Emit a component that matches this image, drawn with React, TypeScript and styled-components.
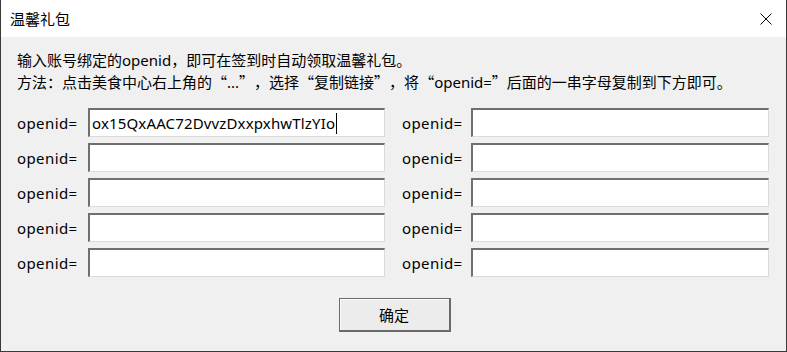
import styled, { createGlobalStyle } from "styled-components";
import { FC, Fragment } from "react";

const GlobalStyle = createGlobalStyle`
  html, body {
    margin: 0;
    padding: 0;
    background: #f0f0f0;
  }
  body {
    font-family: "Noto Sans", "Noto Sans CJK SC", sans-serif;
    font-size: 15px;
    color: #000;
  }
`;

const OPENIDS = ["ox15QxAAC72DvvzDxxpxhwTlzYIo", "", "", "", "", "", "", "", "", ""];

interface IFieldProps {
  value: string;
  focused?: boolean;
  labelWidth: number;
}

const Field: FC<IFieldProps> = ({ value, focused, labelWidth }) => {
  return (
    <FieldRow>
      <Label $width={labelWidth}>openid=</Label>
      <TextBox>
        {value}
        {focused && <Caret />}
      </TextBox>
    </FieldRow>
  );
};

export default function App() {
  // left column holds the first five, right column the rest
  const left = OPENIDS.slice(0, 5);
  const right = OPENIDS.slice(5);
  return (
    <>
      <GlobalStyle />
      <Window>
        <TitleBar>
          <Title>温馨礼包</Title>
          <CloseButton aria-label="close">
            <svg width="12" height="12" viewBox="0 0 12 12">
              <path d="M0.5 0.5 L11.5 11.5 M11.5 0.5 L0.5 11.5" stroke="#000" strokeWidth="1" fill="none" />
            </svg>
          </CloseButton>
        </TitleBar>
        <Body>
          <Intro>
            <div>输入账号绑定的openid，即可在签到时自动领取温馨礼包。</div>
            <div>
              方法：点击美食中心右上角的<OpenQ>“</OpenQ>...<CloseQ>”</CloseQ>，选择<OpenQ>“</OpenQ>复制链接
              <CloseQ>”</CloseQ>，将<OpenQ>“</OpenQ>openid=<CloseQ>”</CloseQ>后面的一串字母复制到下方即可。
            </div>
          </Intro>
          <Grid>
            {left.map((v, i) => (
              <Fragment key={i}>
                <Field value={v} focused={i === 0} labelWidth={71} />
                <Field value={right[i]} labelWidth={69} />
              </Fragment>
            ))}
          </Grid>
          <Footer>
            <OkButton>确定</OkButton>
          </Footer>
        </Body>
      </Window>
    </>
  );
}

const Window = styled.div`
  width: 787px;
  height: 352px;
  box-sizing: border-box;
  border: 1px solid #3a3a3a;
  border-top: none;
  background: #f0f0f0;
  display: flex;
  flex-direction: column;
`;

const TitleBar = styled.div`
  height: 37px;
  background: #fff;
  display: flex;
  align-items: center;
  justify-content: space-between;
  padding: 0 14px 0 9px;
`;

const Title = styled.div`
  font-family: "Noto Sans CJK SC", sans-serif;
  font-size: 15px;
  line-height: 20px;
  margin-top: 1px;
`;

const CloseButton = styled.div`
  width: 12px;
  height: 12px;
  display: flex;
`;

const Body = styled.div`
  flex: 1;
  padding: 12px 16px 0 16px;
  display: flex;
  flex-direction: column;
`;

const Intro = styled.div`
  line-height: 22px;
  white-space: nowrap;
`;

const OpenQ = styled.span`
  display: inline-block;
  width: 15px;
  text-align: right;
  font-family: "Noto Sans CJK SC", sans-serif;
`;

const CloseQ = styled(OpenQ)`
  text-align: left;
`;

const Grid = styled.div`
  margin-top: 15px;
  display: grid;
  grid-template-columns: 368px 367px;
  column-gap: 17px;
  row-gap: 6px;
`;

const FieldRow = styled.div`
  display: flex;
  align-items: center;
`;

const Label = styled.div<{ $width: number }>`
  width: ${(p) => p.$width}px;
  flex-shrink: 0;
  letter-spacing: 0.4px;
`;

const TextBox = styled.div`
  flex: 1;
  height: 29px;
  box-sizing: border-box;
  background: #fff;
  border-top: 2px solid #6f6f6f;
  border-left: 2px solid #6f6f6f;
  border-right: 1px solid #dadada;
  border-bottom: 1px solid #dadada;
  display: flex;
  align-items: center;
  padding-left: 2px;
  line-height: 20px;
  white-space: nowrap;
  overflow: hidden;
  letter-spacing: 0.15px;
`;

const Caret = styled.span`
  display: inline-block;
  width: 1px;
  height: 21px;
  background: #000;
  margin-left: 1px;
`;

const Footer = styled.div`
  margin-top: 21px;
  display: flex;
  justify-content: center;
`;

const OkButton = styled.button`
  width: 112px;
  height: 34px;
  box-sizing: border-box;
  background: #ececec;
  border: 1px solid #6a6a6a;
  border-right-width: 2px;
  border-bottom-width: 2px;
  box-shadow: inset 1px 1px 0 #fcfcfc;
  font-family: "Noto Sans CJK SC", sans-serif;
  font-size: 15px;
  color: #000;
  padding: 0;
  margin-left: 2px;
`;
